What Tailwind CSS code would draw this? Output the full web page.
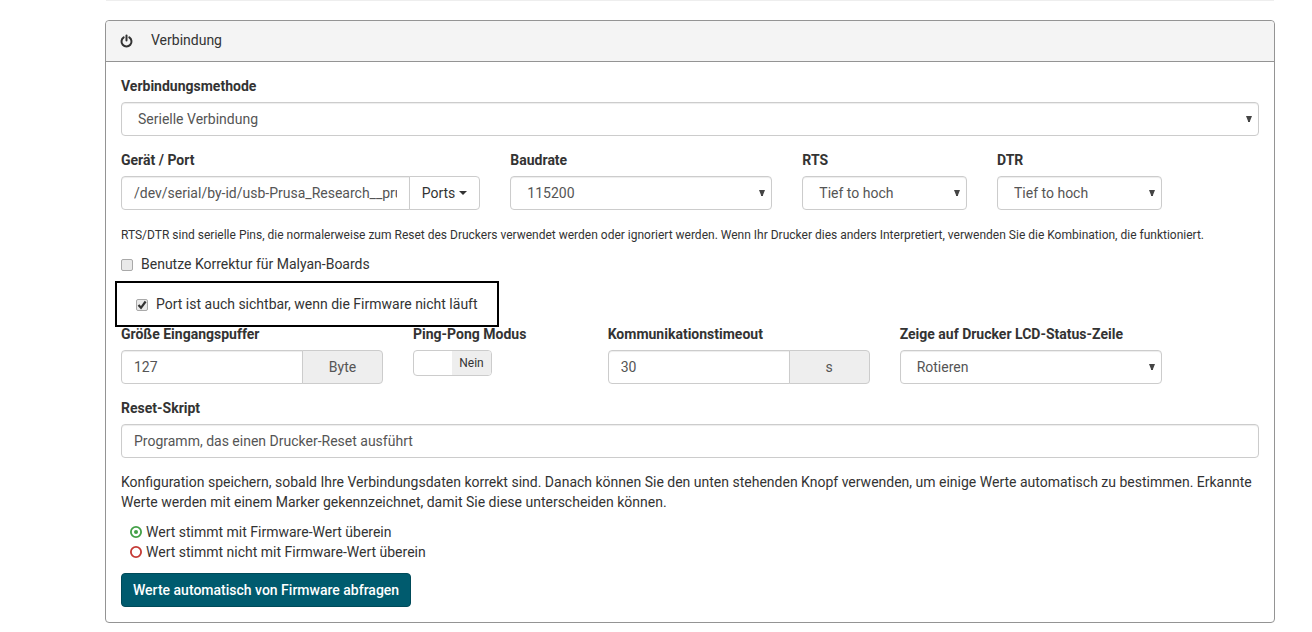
<!DOCTYPE html>
<html lang="de">
<head>
<meta charset="utf-8">
<meta name="viewport" content="width=device-width, initial-scale=1">
<title>Verbindung</title>
<script src="https://cdn.jsdelivr.net/npm/@tailwindcss/browser@4"></script>
</head>
<body class="bg-white font-['Roboto',sans-serif] text-sm leading-5 text-[#333]">
<svg class="hidden"><symbol id="arrow" viewBox="0 0 6 6"><path d="M0 0h6L4 5v1H2V5z" fill="currentColor"/></symbol></svg>
<main class="ml-[105px] mr-[37px]">
  <div class="mx-px h-px bg-[#eee]"></div>
  <form class="mt-[19px] rounded border border-[#949494] bg-white">
    <header class="box-content flex h-10 items-center gap-[17px] rounded-t border-b border-[#949494] bg-[#f4f4f4] px-[14px]">
      <svg class="h-[14px] w-[14px]" viewBox="0 0 14 14" fill="none" stroke="#333" stroke-width="2" stroke-linecap="round"><path d="M6.500 1.500v5"/><path d="M3.700 3.300a5 5 0 1 0 5.600 0"/></svg>
      <h2 class="pb-[2px]">Verbindung</h2>
    </header>
    <div class="px-[15px] pb-[15px] pt-[14px]">
      <div>
        <label for="method" class="mb-[6px] block font-bold">Verbindungsmethode</label>
        <div class="relative">
          <select id="method" class="h-[34px] w-full appearance-none rounded border border-[#ccc] bg-white px-4 text-[#555] shadow-[inset_0_1px_1px_rgba(0,0,0,0.075)]"><option>Serielle Verbindung</option></select>
          <svg class="pointer-events-none absolute right-[7px] top-[14px] h-[6px] w-[6px] text-[#444]"><use href="#arrow"/></svg>
        </div>
      </div>

      <div class="-mx-[15px] mt-[14px] grid grid-cols-12 *:px-[15px]">
        <div class="col-span-4">
          <label for="port" class="mb-[6px] block font-bold">Gerät / Port</label>
          <div class="flex">
            <input id="port" type="text" value="/dev/serial/by-id/usb-Prusa_Research__prusa" class="h-[34px] min-w-0 flex-1 rounded-l border border-[#ccc] px-3 text-[#555] shadow-[inset_0_1px_1px_rgba(0,0,0,0.075)]">
            <button type="button" class="-ml-px flex h-[34px] items-center gap-1 rounded-r border border-[#ccc] bg-white px-3 text-[#333]">Ports<svg class="h-1 w-2" viewBox="0 0 8 4"><path d="M0 0h8L4 4z" fill="#333"/></svg></button>
          </div>
        </div>
        <div class="col-span-3">
          <label for="baud" class="mb-[6px] block font-bold">Baudrate</label>
          <div class="relative">
            <select id="baud" class="h-[34px] w-full appearance-none rounded border border-[#ccc] bg-white px-4 text-[#555] shadow-[inset_0_1px_1px_rgba(0,0,0,0.075)]"><option>115200</option></select>
            <svg class="pointer-events-none absolute right-[7px] top-[14px] h-[6px] w-[6px] text-[#444]"><use href="#arrow"/></svg>
          </div>
        </div>
        <div class="col-span-2">
          <label for="rts" class="mb-[6px] block font-bold">RTS</label>
          <div class="relative">
            <select id="rts" class="h-[34px] w-full appearance-none rounded border border-[#ccc] bg-white px-4 text-[#555] shadow-[inset_0_1px_1px_rgba(0,0,0,0.075)]"><option>Tief to hoch</option></select>
            <svg class="pointer-events-none absolute right-[7px] top-[14px] h-[6px] w-[6px] text-[#444]"><use href="#arrow"/></svg>
          </div>
        </div>
        <div class="col-span-2">
          <label for="dtr" class="mb-[6px] block font-bold">DTR</label>
          <div class="relative">
            <select id="dtr" class="h-[34px] w-full appearance-none rounded border border-[#ccc] bg-white px-4 text-[#555] shadow-[inset_0_1px_1px_rgba(0,0,0,0.075)]"><option>Tief to hoch</option></select>
            <svg class="pointer-events-none absolute right-[7px] top-[14px] h-[6px] w-[6px] text-[#444]"><use href="#arrow"/></svg>
          </div>
        </div>
      </div>

      <p class="mt-[15px] text-xs leading-5">RTS/DTR sind serielle Pins, die normalerweise zum Reset des Druckers verwendet werden oder ignoriert werden. Wenn Ihr Drucker dies anders Interpretiert, verwenden Sie die Kombination, die funktioniert.</p>

      <div class="mt-[9px] flex items-center gap-2">
        <input id="malyan" type="checkbox" class="mt-px h-3 w-3 appearance-none rounded-xs border border-[#a9a9a9] bg-[#e9e9e9]">
        <label for="malyan">Benutze Korrektur für Malyan-Boards</label>
      </div>

      <div class="-mb-[3px] -ml-[6px] mt-[7px] flex h-[46px] w-fit items-center gap-2 border-2 border-black pl-[19px] pr-[19px]">
        <span class="relative mt-[2px] flex">
          <input id="visible" type="checkbox" checked class="h-3 w-3 appearance-none rounded-xs border border-[#a9a9a9] bg-[#e9e9e9]">
          <svg class="pointer-events-none absolute inset-0 h-3 w-3" viewBox="0 0 12 12" fill="none" stroke="#333" stroke-width="2.200"><path d="M2.500 6l2.500 2.800L9.600 2.500"/></svg>
        </span>
        <label for="visible">Port ist auch sichtbar, wenn die Firmware nicht läuft</label>
      </div>

      <div class="-mx-[15px] grid grid-cols-12 *:px-[15px]">
        <div class="col-span-3">
          <label for="buffer" class="mb-[6px] block font-bold">Größe Eingangspuffer</label>
          <div class="flex">
            <input id="buffer" type="text" value="127" class="h-[34px] min-w-0 flex-1 rounded-l border border-[#ccc] px-3 text-[#555] shadow-[inset_0_1px_1px_rgba(0,0,0,0.075)]">
            <span class="-ml-px flex w-[81px] items-center justify-center rounded-r border border-[#ccc] bg-[#eee] text-[#555]">Byte</span>
          </div>
        </div>
        <div class="col-span-2">
          <label for="pingpong" class="mb-[6px] block whitespace-nowrap font-bold">Ping-Pong Modus</label>
          <button id="pingpong" type="button" role="switch" aria-checked="false" class="flex h-[26px] w-[79px] overflow-hidden rounded border border-[#ccc] bg-white text-xs"><span class="h-full w-[38px]"></span><span class="flex h-full flex-1 items-center justify-center bg-[#eee]">Nein</span></button>
        </div>
        <div class="col-span-3">
          <label for="timeout" class="mb-[6px] block font-bold">Kommunikationstimeout</label>
          <div class="flex">
            <input id="timeout" type="text" value="30" class="h-[34px] min-w-0 flex-1 rounded-l border border-[#ccc] px-3 text-[#555] shadow-[inset_0_1px_1px_rgba(0,0,0,0.075)]">
            <span class="-ml-px flex w-[81px] items-center justify-center rounded-r border border-[#ccc] bg-[#eee] text-[#555]">s</span>
          </div>
        </div>
        <div class="col-span-3">
          <label for="lcd" class="mb-[6px] block font-bold">Zeige auf Drucker LCD-Status-Zeile</label>
          <div class="relative">
            <select id="lcd" class="h-[34px] w-full appearance-none rounded border border-[#ccc] bg-white px-4 text-[#555] shadow-[inset_0_1px_1px_rgba(0,0,0,0.075)]"><option>Rotieren</option></select>
            <svg class="pointer-events-none absolute right-[7px] top-[14px] h-[6px] w-[6px] text-[#444]"><use href="#arrow"/></svg>
          </div>
        </div>
      </div>

      <div class="mt-[14px]">
        <label for="reset" class="mb-[6px] block font-bold">Reset-Skript</label>
        <input id="reset" type="text" placeholder="Programm, das einen Drucker-Reset ausführt" class="block h-[34px] w-full rounded border border-[#ccc] px-3 text-[#555] shadow-[inset_0_1px_1px_rgba(0,0,0,0.075)] placeholder:text-[#555]">
      </div>

      <p class="mt-[14px]">Konfiguration speichern, sobald Ihre Verbindungsdaten korrekt sind. Danach können Sie den unten stehenden Knopf verwenden, um einige Werte automatisch zu bestimmen. Erkannte Werte werden mit einem Marker gekennzeichnet, damit Sie diese unterscheiden können.</p>

      <ul class="mb-[11px] ml-[9px] mt-[10px]">
        <li class="flex items-center gap-1"><svg class="h-3 w-3" viewBox="0 0 12 12"><circle cx="6" cy="6" r="5.100" fill="none" stroke="#43a047" stroke-width="1.800"/><circle cx="6" cy="6" r="2" fill="#43a047"/></svg>Wert stimmt mit Firmware-Wert überein</li>
        <li class="flex items-center gap-1"><svg class="h-3 w-3" viewBox="0 0 12 12"><circle cx="6" cy="6" r="5.100" fill="none" stroke="#c53a35" stroke-width="1.800"/></svg>Wert stimmt nicht mit Firmware-Wert überein</li>
      </ul>

      <button type="button" class="block h-[34px] rounded border border-[#004a59] bg-[#005b6e] px-[11px] font-medium text-white">Werte automatisch von Firmware abfragen</button>
    </div>
  </form>
</main>
</body>
</html>
